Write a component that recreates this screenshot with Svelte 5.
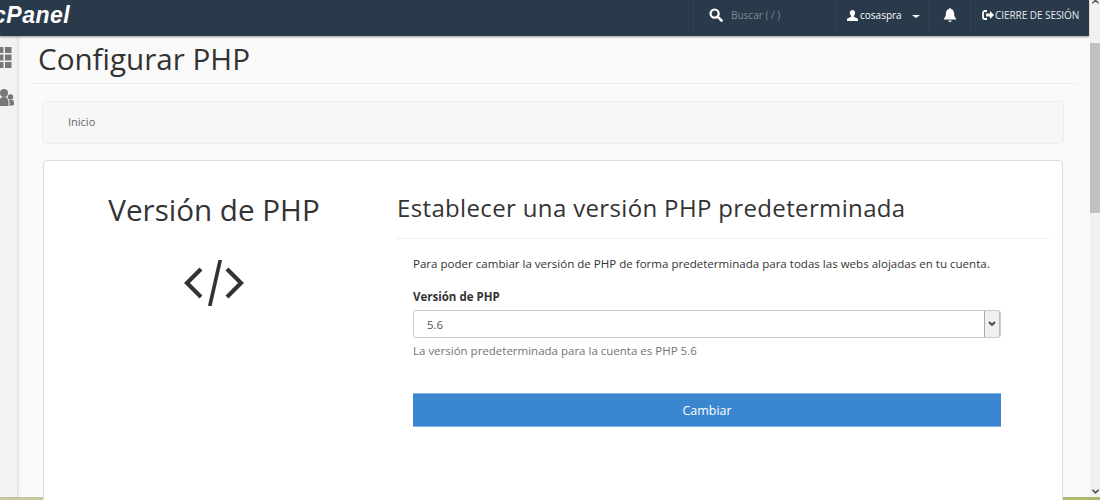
<script>
  const icons = {
    grid: 'M-3 1h6.500v6H-3zM5 1h6.500v6H5zM-3 8.500h6.500v6H-3zM5 8.500h6.500v6H5zM-3 16h6.500v6H-3zM5 16h6.500v6H5z'
  }
</script>

<div class="page">
  <header class="topbar">
    <div class="logo">cPanel</div>
    <div class="tools">
      <div class="tool search">
        <svg class="search-icon" viewBox="0 0 14 14" width="14" height="14">
          <circle cx="5.6" cy="5.6" r="4.1" fill="none" stroke="#fff" stroke-width="2.2" />
          <path d="M8.6 8.6l4 4" stroke="#fff" stroke-width="2.6" stroke-linecap="round" />
        </svg>
        <span class="placeholder">Buscar ( / )</span>
      </div>
      <div class="tool user">
        <svg viewBox="0 0 12 12" width="11" height="11">
          <path d="M6 0c1.900 0 2.900 1.500 2.900 3.300 0 1.300-.6 2.500-1.400 3.100v1l3.500 1.700c.6.300 1 .7 1 1.400V12H0v-1.500c0-.7.400-1.100 1-1.400l3.500-1.700v-1c-.8-.6-1.400-1.800-1.400-3.100C3.100 1.500 4.100 0 6 0z" fill="#fff" />
        </svg>
        <span>cosaspra</span>
        <i class="caret"></i>
      </div>
      <div class="tool bell">
        <svg viewBox="0 0 14 14" width="14" height="14">
          <path d="M7 0c.5 0 .9.400.9.900 2 .4 3.200 2 3.200 4.200 0 3 .8 4.400 2 5.700v.8H.9v-.8c1.200-1.300 2-2.700 2-5.700 0-2.200 1.200-3.800 3.200-4.200 0-.5.400-.9.900-.9zM5.300 12.500h3.400C8.500 13.400 7.800 14 7 14s-1.500-.6-1.700-1.500z" fill="#fff" />
        </svg>
      </div>
      <div class="tool logout">
        <svg viewBox="0 0 12 10" width="12" height="10">
          <path d="M5 1H3a2 2 0 0 0-2 2v4a2 2 0 0 0 2 2h2" fill="none" stroke="#fff" stroke-width="1.800" />
          <path d="M4 3.500h4V1l4 4-4 4V6.500H4z" fill="#fff" />
        </svg>
        <span>CIERRE DE SESIÓN</span>
      </div>
    </div>
  </header>

  <div class="body">
    <aside class="sidebar">
      <svg class="side-icon" viewBox="0 0 12 22" width="12" height="22">
        <path d={icons.grid} fill="#777" />
      </svg>
      <svg class="side-icon" viewBox="0 0 14 17" width="14" height="17">
        <circle cx="4" cy="4" r="4" fill="#777" />
        <circle cx="10.500" cy="8" r="2.800" fill="#777" />
        <path d="M-1 17v-4c0-3 2-5 5-5s4.500 2 4.500 5v4zM9.500 17v-4c0-.8-.2-1.400-.5-2h3c1.500 0 2 1 2 2.500V16z" fill="#777" />
      </svg>
    </aside>

    <main class="content">
      <h1>Configurar PHP</h1>
      <nav class="breadcrumb">Inicio</nav>

      <section class="card">
        <div class="left">
          <h2>Versión de PHP</h2>
          <svg class="code" viewBox="0 0 60 46" width="60" height="46">
            <path d="M17 9L3 23l14 14M43 9l14 14-14 14" fill="none" stroke="#333" stroke-width="4.200" />
            <path d="M36 1L26 45" fill="none" stroke="#333" stroke-width="3.600" stroke-linecap="round" />
          </svg>
        </div>
        <div class="right">
          <h3>Establecer una versión PHP predeterminada</h3>
          <form class="form">
            <p class="lead">Para poder cambiar la versión de PHP de forma predeterminada para todas las webs alojadas en tu cuenta.</p>
            <div class="label">Versión de PHP</div>
            <div class="select">
              <span class="value">5.6</span>
              <span class="arrow">
                <svg viewBox="0 0 8 6" width="8" height="6">
                  <path d="M1 1l3 3 3-3" fill="none" stroke="#444" stroke-width="1.800" />
                </svg>
              </span>
            </div>
            <p class="help">La versión predeterminada para la cuenta es PHP 5.6</p>
            <button type="button" class="submit">Cambiar</button>
          </form>
        </div>
      </section>
    </main>

    <div class="scrollbar">
      <div class="scroll-up">
        <svg viewBox="0 0 8 5" width="7" height="5"><path d="M.5 4.500L4 1l3.500 3.500" fill="none" stroke="#505050" stroke-width="1.500" /></svg>
      </div>
      <div class="track"><div class="thumb"></div></div>
      <div class="scroll-down">
        <svg viewBox="0 0 8 5" width="7" height="5"><path d="M.5.500L4 4 7.500.500" fill="none" stroke="#505050" stroke-width="1.800" /></svg>
      </div>
    </div>
  </div>

  <div class="desktop-strip"></div>
</div>

<style>
  :global(body) {
    margin: 0;
    overflow: hidden;
    background: #fafafa;
  }

  .page {
    width: 1100px;
    height: 500px;
    overflow: hidden;
    position: relative;
    font-family: "Open Sans", sans-serif;
    color: #333;
  }

  .topbar {
    height: 36px;
    width: 1089px;
    background: #293a4a;
    display: flex;
    justify-content: space-between;
    box-shadow: 0 1px 2px rgba(0, 0, 0, 0.4);
    position: relative;
    z-index: 2;
    overflow: hidden;
  }

  .logo {
    margin-left: -7px;
    font-family: "Liberation Sans", sans-serif;
    font-weight: 700;
    font-style: italic;
    font-size: 23px;
    line-height: 30px;
    color: #fff;
    letter-spacing: 0.5px;
  }

  .tools {
    display: flex;
    height: 36px;
  }

  .tool {
    display: flex;
    align-items: center;
    padding-bottom: 6px;
    border-left: 1px solid #2f4254;
    color: #fff;
    font-size: 10px;
  }

  .search {
    width: 143px;
    padding-left: 15px;
    box-sizing: border-box;
    gap: 8px;
  }

  .placeholder {
    color: #7f8a95;
  }

  .user {
    width: 92px;
    box-sizing: border-box;
    padding-left: 10px;
    gap: 2px;
  }

  .caret {
    margin-left: 8px;
    margin-top: 2px;
    border-left: 4px solid transparent;
    border-right: 4px solid transparent;
    border-top: 3px solid #fff;
  }

  .bell {
    width: 42px;
    box-sizing: border-box;
    justify-content: center;
  }

  .logout {
    width: 119px;
    box-sizing: border-box;
    padding-left: 11px;
    gap: 1px;
    color: #e8ebee;
    letter-spacing: -0.06px;
  }

  .body {
    display: flex;
    height: 461px;
  }

  .sidebar {
    width: 17px;
    flex: none;
    background: #f2f2f2;
    border-right: 1px solid #e0e0e0;
    box-sizing: content-box;
    display: flex;
    flex-direction: column;
    gap: 21px;
    padding-top: 10px;
    align-items: flex-start;
    box-shadow: 2px 0 3px rgba(0, 0, 0, 0.06);
    overflow: hidden;
  }

  .side-icon {
    flex: none;
  }

  .content {
    flex: 1;
    min-width: 0;
    padding: 0 26px 0 12px;
  }

  h1 {
    margin: 0 -13px 0 0;
    height: 47px;
    line-height: 46px;
    font-size: 29.600px;
    font-weight: 400;
    padding-left: 8px;
    border-bottom: 1px solid #eee;
    box-sizing: content-box;
    color: #333;
  }

  .breadcrumb {
    margin: 17px 0 0 12px;
    height: 41px;
    line-height: 39px;
    padding-left: 25px;
    font-size: 11px;
    color: #666;
    background: #f7f7f7;
    border: 1px solid #eee;
    border-radius: 4px;
    box-sizing: content-box;
  }

  .card {
    margin: 16px 1px 0 13px;
    height: 400px;
    background: #fff;
    border: 1px solid #ddd;
    border-radius: 4px;
    display: flex;
  }

  .left {
    width: 340px;
    flex: none;
    text-align: center;
  }

  h2 {
    margin: 28px 0 0;
    font-size: 29.600px;
    line-height: 42px;
    font-weight: 400;
    color: #333;
  }

  .code {
    display: block;
    margin: 29px auto 0;
  }

  .right {
    flex: 1;
    min-width: 0;
    margin-right: 13px;
    margin-left: 12px;
  }

  h3 {
    margin: 0;
    padding: 29px 0 12px 1px;
    font-size: 24px;
    line-height: 36px;
    font-weight: 400;
    color: #333;
    border-bottom: 1px solid #eee;
    letter-spacing: 0.35px;
  }

  .form {
    padding: 16px 48px 0 17px;
  }

  .lead {
    margin: 0;
    font-size: 11.550px;
    line-height: 17px;
    color: #333;
  }

  .label {
    margin-top: 17px;
    font-size: 11.500px;
    line-height: 16px;
    font-weight: 700;
    color: #333;
  }

  .select {
    margin-top: 5px;
    height: 28px;
    box-sizing: border-box;
    border: 1px solid #ccc;
    border-radius: 3px;
    display: flex;
    justify-content: space-between;
    background: #fff;
  }

  .value {
    padding-left: 13px;
    font-size: 11.500px;
    line-height: 28px;
    color: #555;
  }

  .arrow {
    width: 14px;
    background: #efefef;
    border-left: 1px solid #a9a9a9;
    border-right: 1px solid #bbb;
    display: flex;
    align-items: center;
    justify-content: center;
  }

  .help {
    margin: 5px 0 0;
    font-size: 11.500px;
    line-height: 16px;
    color: #737373;
  }

  .submit {
    display: block;
    margin-top: 34px;
    width: 100%;
    height: 34px;
    background: #3a87cf;
    border: 0;
    border-top: 1px solid #7fb2e0;
    border-bottom: 1px solid #7fb2e0;
    color: #fff;
    font-family: inherit;
    font-size: 12.500px;
    padding: 0;
  }

  .scrollbar {
    width: 10px;
    flex: none;
    margin-top: -36px;
    background: #f1f1f1;
    display: flex;
    flex-direction: column;
    position: relative;
    z-index: 3;
  }

  .scroll-up, .scroll-down {
    flex: none;
    display: flex;
    justify-content: center;
  }

  .scroll-up {
    height: 4px;
    align-items: flex-end;
  }

  .scroll-down {
    height: 8px;
    align-items: flex-start;
  }

  .track {
    flex: 1;
    padding-top: 39px;
  }

  .thumb {
    height: 170px;
    background: #c1c1c1;
  }

  .desktop-strip {
    height: 3px;
    background: linear-gradient(90deg, #c9c7a0 0 6%, #e2e0d0 6% 11%, #c0c290 11% 17%, #9fb35c 17% 21%, #c0c290 21% 33%, #a6b966 33% 39%, #d8d6c0 39% 43%, #a3b560 43% 70%, #acb96f 70% 100%);
  }
</style>
